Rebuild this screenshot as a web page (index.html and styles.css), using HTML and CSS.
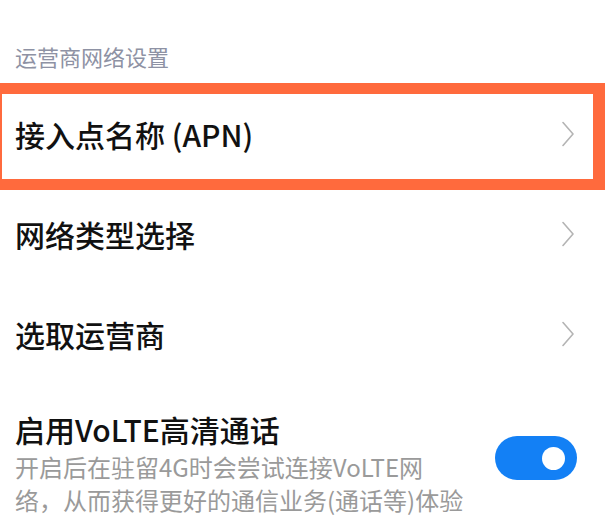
FILE: index.html
```html
<!DOCTYPE html>
<html lang="zh-CN">
<head>
<meta charset="utf-8">
<link rel="stylesheet" href="styles.css">
</head>
<body>
<div class="screen">
  <div class="section-title">运营商网络设置</div>
  <div class="row">
    <span class="row-label">接入点名称 (APN)</span>
    <svg class="chevron" width="12" height="26" viewBox="0 0 12 26"><path d="M1 1.5 L11 13 L1 24.5" fill="none" stroke="#b4b4b4" stroke-width="1.6" stroke-linecap="round" stroke-linejoin="round"/></svg>
  </div>
  <div class="row">
    <span class="row-label">网络类型选择</span>
    <svg class="chevron" width="12" height="26" viewBox="0 0 12 26"><path d="M1 1.5 L11 13 L1 24.5" fill="none" stroke="#b4b4b4" stroke-width="1.6" stroke-linecap="round" stroke-linejoin="round"/></svg>
  </div>
  <div class="row">
    <span class="row-label">选取运营商</span>
    <svg class="chevron" width="12" height="26" viewBox="0 0 12 26"><path d="M1 1.5 L11 13 L1 24.5" fill="none" stroke="#b4b4b4" stroke-width="1.6" stroke-linecap="round" stroke-linejoin="round"/></svg>
  </div>
  <div class="toggle-row">
    <div class="toggle-text">
      <div class="toggle-title">启用VoLTE高清通话</div>
      <div class="toggle-desc">开启后在驻留4G时会尝试连接VoLTE网络，从而获得更好的通信业务(通话等)体验</div>
    </div>
    <div class="switch"><div class="knob"></div></div>
  </div>
  <div class="highlight"></div>
</div>
</body>
</html>
```
FILE: styles.css
```css
html, body {
  margin: 0;
  padding: 0;
  background: #ffffff;
}
.screen {
  position: relative;
  width: 609px;
  height: 518px;
  overflow: hidden;
  font-family: "Noto Sans CJK SC", "Noto Sans", sans-serif;
  color: #111111;
}
.section-title {
  margin-top: 41px;
  padding-left: 15px;
  font-size: 22px;
  line-height: 30px;
  color: #8e92a4;
  height: 30px;
}
.row {
  margin-top: 13px;
  height: 100px;
  display: flex;
  align-items: center;
  justify-content: space-between;
  padding: 0 35px 0 15px;
}
.row + .row {
  margin-top: 0;
}
.row-label {
  font-size: 30px;
  font-weight: 500;
  line-height: 40px;
}
.chevron {
  display: block;
}
.toggle-row {
  display: flex;
  align-items: center;
  justify-content: space-between;
  padding: 26px 32px 0 15px;
}
.toggle-text {
  width: 452px;
}
.toggle-title {
  font-size: 30px;
  font-weight: 500;
  line-height: 38px;
}
.toggle-desc {
  margin-top: 2px;
  font-size: 24px;
  line-height: 33px;
  color: #9a9a9a;
}
.switch {
  width: 82px;
  height: 44px;
  border-radius: 22px;
  background: #1380f5;
  display: flex;
  align-items: center;
  justify-content: flex-end;
  padding-right: 12px;
  box-sizing: border-box;
  margin-top: -10px;
}
.knob {
  width: 23px;
  height: 23px;
  border-radius: 50%;
  background: #ffffff;
}
.highlight {
  position: absolute;
  left: -9px;
  top: 83px;
  width: 614px;
  height: 107px;
  box-sizing: border-box;
  border: 11px solid #ff6a3d;
  border-right-width: 12px;
}
```
